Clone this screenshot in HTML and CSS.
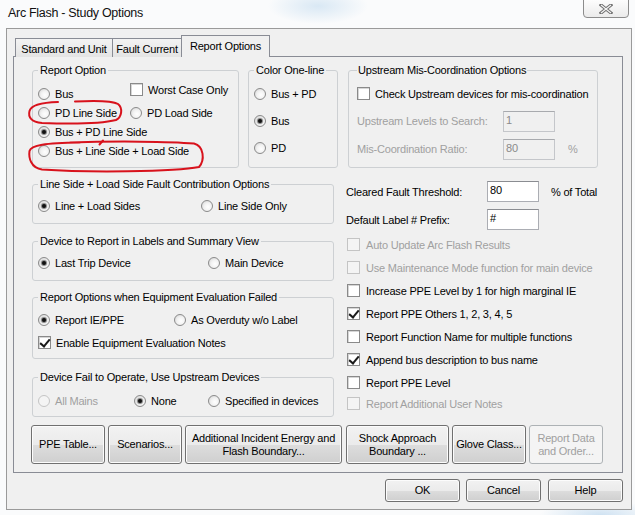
FILE: index.html
```html
<!DOCTYPE html>
<html lang="en">
<head>
  <meta charset="UTF-8" />
  <meta name="viewport" content="width=device-width, initial-scale=1.0" />
  <title>Arc Flash - Study Options</title>
  <link rel="stylesheet" href="styles.css">
</head>
<body>
  <div class="window">
    <div class="titlebar">
      <span class="title">Arc Flash - Study Options</span>
      <button class="close" title="Close">
        <svg width="14" height="10" viewBox="0 0 14 10">
          <path d="M2 1 L12 9 M12 1 L2 9" stroke="#707070" stroke-width="3.2" stroke-linecap="square" fill="none"/>
          <path d="M2 1 L12 9 M12 1 L2 9" stroke="#f6f6f6" stroke-width="1.2" fill="none"/>
        </svg>
      </button>
    </div>

    <div class="client">
      <div class="tabs">
        <span class="tab t-std">Standard and Unit</span>
        <span class="tab t-fault">Fault Current</span>
        <span class="tab active t-report">Report Options</span>
      </div>

      <div class="page">
        <div class="top-row">
          <fieldset class="group report-option">
            <legend>Report Option</legend>
            <label class="opt"><span class="radio"></span>Bus</label>
            <label class="opt raised"><span class="check"></span>Worst Case Only</label>
            <label class="opt"><span class="radio"></span>PD Line Side</label>
            <label class="opt"><span class="radio"></span>PD Load Side</label>
            <label class="opt wide"><span class="radio on"></span>Bus + PD Line Side</label>
            <label class="opt wide"><span class="radio"></span>Bus + Line Side + Load Side</label>
          </fieldset>

          <fieldset class="group color-line">
            <legend>Color One-line</legend>
            <label class="opt"><span class="radio"></span>Bus + PD</label>
            <label class="opt"><span class="radio on"></span>Bus</label>
            <label class="opt"><span class="radio"></span>PD</label>
          </fieldset>

          <fieldset class="group upstream">
            <legend>Upstream Mis-Coordination Options</legend>
            <label class="opt wide"><span class="check"></span>Check Upstream devices for mis-coordination</label>
            <span class="off">Upstream Levels to Search:</span>
            <span class="field disabled">1</span>
            <span></span>
            <span class="off">Mis-Coordination Ratio:</span>
            <span class="field disabled">80</span>
            <span class="off unit">%</span>
          </fieldset>
        </div>

        <div class="mid">
          <div class="left-col">
            <fieldset class="group g-contrib">
              <legend>Line Side + Load Side Fault Contribution Options</legend>
              <label class="opt"><span class="radio on"></span>Line + Load Sides</label>
              <label class="opt"><span class="radio"></span>Line Side Only</label>
            </fieldset>

            <fieldset class="group g-device">
              <legend>Device to Report in Labels and Summary View</legend>
              <label class="opt"><span class="radio on"></span>Last Trip Device</label>
              <label class="opt"><span class="radio"></span>Main Device</label>
            </fieldset>

            <fieldset class="group g-eval">
              <legend>Report Options when Equipment Evaluation Failed</legend>
              <label class="opt"><span class="radio on"></span>Report IE/PPE</label>
              <label class="opt"><span class="radio"></span>As Overduty w/o Label</label>
              <label class="opt wide"><span class="check on"></span>Enable Equipment Evaluation Notes</label>
            </fieldset>

            <fieldset class="group g-fail">
              <legend>Device Fail to Operate, Use Upstream Devices</legend>
              <label class="opt off"><span class="radio dis"></span>All Mains</label>
              <label class="opt"><span class="radio on"></span>None</label>
              <label class="opt"><span class="radio"></span>Specified in devices</label>
            </fieldset>
          </div>

          <div class="right-col">
            <div class="field-row">
              <span>Cleared Fault Threshold:</span>
              <span class="field">80</span>
              <span class="unit">% of Total</span>
            </div>
            <div class="field-row">
              <span>Default Label # Prefix:</span>
              <span class="field">#</span>
            </div>
            <ul class="checks">
              <li class="opt off"><span class="check dis"></span>Auto Update Arc Flash Results</li>
              <li class="opt off"><span class="check dis"></span>Use Maintenance Mode function for main device</li>
              <li class="opt"><span class="check"></span>Increase PPE Level by 1 for high marginal IE</li>
              <li class="opt"><span class="check on"></span>Report PPE Others 1, 2, 3, 4, 5</li>
              <li class="opt"><span class="check"></span>Report Function Name for multiple functions</li>
              <li class="opt"><span class="check on"></span>Append bus description to bus name</li>
              <li class="opt"><span class="check"></span>Report PPE Level</li>
              <li class="opt off last"><span class="check dis"></span>Report Additional User Notes</li>
            </ul>
          </div>
        </div>

        <div class="tools">
          <button class="btn b-ppe">PPE Table...</button>
          <button class="btn b-scen">Scenarios...</button>
          <button class="btn b-add">Additional Incident Energy and<br>Flash Boundary...</button>
          <button class="btn b-shock">Shock Approach<br>Boundary ...</button>
          <button class="btn b-glove">Glove Class...</button>
          <button class="btn b-data" disabled>Report Data<br>and Order...</button>
        </div>
      </div>

      <div class="actions">
        <button class="btn b-ok">OK</button>
        <button class="btn b-cancel">Cancel</button>
        <button class="btn b-help">Help</button>
      </div>
    </div>

    <!-- red pen marks drawn over the dialog -->
    <svg class="marks" width="635" height="515" viewBox="0 0 635 515">
      <path d="M75 101.5 C95 100.5 112 100.5 118 104 C123 108 122 117 116 120 C100 124 70 124 42 123 C31 122 28 117 29.5 111 C31 105 40 102.5 58 102" />
      <path d="M70 142.5 C115 141 170 141.5 194 143.5 C204 146 205 160 199 167 C175 172 85 172.5 42 169.5 C31 168 28.5 158 29.5 151 C31 145 45 143 80 142.5" />
      <path d="M99.5 144.5 L103 140.5" />
    </svg>
  </div>
</body>
</html>
```

FILE: styles.css
```css
* {
  margin: 0;
  padding: 0;
  box-sizing: border-box;
}
body {
  width: 635px;
  height: 515px;
  overflow: hidden;
  font-family: 'Liberation Sans', Arial, sans-serif;
  font-size: 11px;
  letter-spacing: -0.2px;
  color: #000;
  background: #fff;
}
.window {
  position: relative;
  width: 635px;
  height: 515px;
  background:
    radial-gradient(ellipse 50px 18px at 318px 6px, #d9e8f4, rgba(217, 232, 244, 0)),
    radial-gradient(ellipse 60px 14px at 600px 515px, #cfe2f2, rgba(207, 226, 242, 0)),
    #fafbfc;
}

/* title bar */
.titlebar {
  height: 28px;
  display: flex;
  justify-content: space-between;
  align-items: flex-start;
  padding-left: 8px;
}
.title {
  font-size: 12.5px;
  letter-spacing: -0.3px;
  line-height: 27px;
  color: #111;
}
.close {
  width: 46px;
  height: 19px;
  margin: -1px 6px 0 0;
  border: 1px solid #8c8c8c;
  border-radius: 0 0 4px 4px;
  background: linear-gradient(#fdfdfd, #ebebeb);
  display: flex;
  align-items: center;
  justify-content: center;
}

/* dialog body */
.client {
  margin-left: 6px;
  width: 626px;
  height: 482px;
  border: 1px solid #9a9a9a;
  background: #f0f0f0;
}
.tabs {
  height: 28px;
  margin-bottom: -1px;
  padding-left: 8px;
  display: flex;
  align-items: flex-end;
}
.tab {
  height: 19px;
  border: 1px solid #898c95;
  border-bottom: none;
  background: linear-gradient(#f3f3f3, #e4e4e4);
  text-align: center;
  line-height: 18px;
  padding-top: 1px;
}
.t-std { width: 98px; }
.t-fault { width: 70px; margin-left: -1px; }
.tab.active {
  position: relative;
  height: 22px;
  width: 89px;
  margin-left: -1px;
  background: #f0f0f0;
  padding-top: 0;
  line-height: 20px;
}
.page {
  margin-left: 6px;
  width: 610px;
  height: 417px;
  border: 1px solid #898c95;
  padding: 7px 0 0 18px;
}

/* group boxes */
.group {
  border: 1px solid #cdd0d3;
  border-radius: 3px;
  padding: 0 5px;
  min-width: 0;
  display: grid;
  align-items: center;
}
.group legend {
  padding: 0 2px;
  line-height: 13px;
}
.opt {
  display: flex;
  align-items: center;
  gap: 5px;
  white-space: nowrap;
}
.wide { grid-column: 1 / -1; }
.off { color: #a0a0a0; }

.radio {
  flex: none;
  position: relative;
  width: 12px;
  height: 12px;
  border: 1px solid #8a8a8a;
  border-radius: 50%;
  background: radial-gradient(circle at 60% 60%, #fff 0, #f2f2f2 45%, #cfcfcf 100%);
}
.radio.on::after {
  content: '';
  position: absolute;
  left: 3px;
  top: 3px;
  width: 4px;
  height: 4px;
  border-radius: 50%;
  background: #111;
  box-shadow: 0 0 1px 1px #7a7a7a;
}
.radio.dis {
  border-color: #c4c4c4;
  background: #f4f4f4;
}
.check {
  flex: none;
  position: relative;
  width: 13px;
  height: 13px;
  border: 1px solid #8a8a8a;
  background: #fff;
  box-shadow: inset 1px 1px 0 #d6d6d6;
}
.check.on::after {
  content: '';
  position: absolute;
  left: 3px;
  top: 0;
  width: 4px;
  height: 8px;
  border: solid #1a1a1a;
  border-width: 0 2px 2px 0;
  transform: rotate(40deg);
}
.check.dis {
  border-color: #c4c4c4;
  background: #f4f4f4;
  box-shadow: none;
}

.field {
  height: 21px;
  border: 1px solid #abadb3;
  border-top-color: #8a8c91;
  background: #fff;
  padding: 2px 0 0 2px;
}
.field.disabled {
  background: #f0f0f0;
  color: #8a8a8a;
  border-color: #c4c6ca;
  border-top-color: #a8aaae;
}

.top-row {
  display: flex;
  height: 104px;
}
.report-option {
  width: 207px;
  height: 104px;
  padding-top: 7px;
  grid-template-columns: 92px auto;
  grid-auto-rows: 19px;
  align-content: start;
}
.raised { margin-top: -8px; }
.color-line {
  width: 90px;
  height: 104px;
  margin-left: 9px;
  padding-top: 3px;
  grid-auto-rows: 27px;
  align-content: start;
}
.upstream {
  width: 250px;
  height: 104px;
  margin-left: 10px;
  padding: 3px 8px 0;
  grid-template-columns: 146px 52px auto;
  grid-template-rows: 27px 28px 28px;
  align-content: start;
}
.upstream legend { padding: 0 1px; }
.upstream .unit { padding-left: 13px; }

/* middle section */
.mid {
  display: grid;
  grid-template-columns: 302px 1fr;
  column-gap: 12px;
  margin-top: 10px;
}
.left-col {
  display: flex;
  flex-direction: column;
}
.g-contrib,
.g-device,
.g-fail {
  height: 46px;
  padding-top: 5px;
  grid-auto-rows: 20px;
  align-content: start;
}
.g-contrib { grid-template-columns: 163px auto; }
.g-device { grid-template-columns: 170px auto; margin-top: 11px; }
.g-eval {
  height: 68px;
  margin-top: 10px;
  padding-top: 4px;
  grid-template-columns: 136px auto;
  grid-auto-rows: 23px;
  align-content: start;
}
.g-fail {
  margin-top: 12px;
  padding-top: 7px;
  grid-template-columns: 96px 74px auto;
}

.right-col {
  display: flex;
  flex-direction: column;
}
.field-row {
  display: grid;
  grid-template-columns: 141px 52px auto;
  align-items: center;
  margin-top: 3px;
}
.field-row + .field-row { margin-top: 7px; }
.field-row .unit { padding-left: 12px; }
.checks {
  list-style: none;
  margin-top: 3px;
  padding-left: 1px;
}
.checks .opt {
  height: 23px;
  gap: 6px;
}
.checks .last {
  height: 19px;
}

/* buttons */
.btn {
  font-family: inherit;
  font-size: 11px;
  letter-spacing: -0.2px;
  line-height: 13px;
  color: #000;
  border: 1px solid #707070;
  border-radius: 3px;
  background: linear-gradient(#f2f2f2 0, #ebebeb 50%, #dddddd 51%, #cfcfcf 100%);
  box-shadow: inset 0 0 0 1px #fcfcfc;
}
.btn:disabled {
  color: #a0a0a0;
  border-color: #adb2b5;
  background: #f4f4f4;
  box-shadow: none;
}
.tools {
  display: flex;
  gap: 3px;
  height: 39px;
  margin: 8px 0 0 -1px;
}
.b-ppe, .b-scen, .b-glove, .b-data { width: 74px; }
.b-add { width: 157px; }
.b-shock { width: 103px; margin-left: 1px; }

.actions {
  display: flex;
  justify-content: flex-end;
  gap: 6px;
  width: 616px;
  margin-top: 6px;
}
.actions .btn {
  width: 75px;
  height: 23px;
}
.b-cancel { width: 74px; margin-right: 1px; }

.marks {
  position: absolute;
  left: 0;
  top: 0;
  pointer-events: none;
  fill: none;
  stroke: #d8121c;
  stroke-width: 2;
  stroke-linecap: round;
}
```
